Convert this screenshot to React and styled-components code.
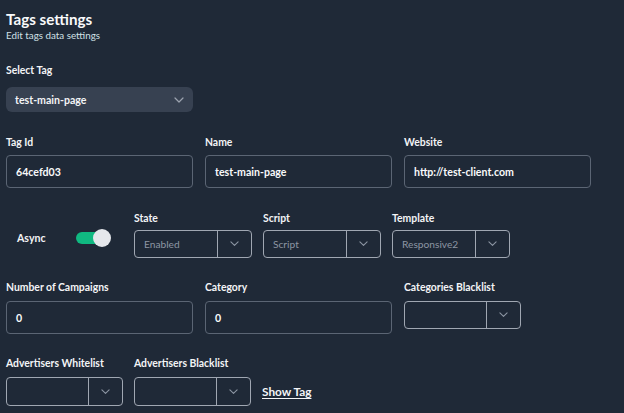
import styled, { createGlobalStyle } from "styled-components";

const GlobalStyle = createGlobalStyle`
  html, body {
    margin: 0;
    padding: 0;
    background: #1f2937;
  }
  body {
    font-family: Lato, "Noto Sans", sans-serif;
    color: #f3f4f6;
  }
`;

const Page = styled.div`
  width: 624px;
  height: 413px;
  box-sizing: border-box;
  padding: 10px 6px 0;
  background: #1f2937;
  overflow: hidden;
`;

const Title = styled.h1`
  margin: 0;
  font-size: 15.2px;
  line-height: 18px;
  font-weight: 700;
  color: #f9fafb;
`;

const Subtitle = styled.p`
  margin: 1px 0 0;
  font-size: 9.8px;
  line-height: 13px;
  color: #d1e0e6;
`;

const Row = styled.div`
  display: flex;
  align-items: ${(p) => p.$align || "flex-start"};
  gap: ${(p) => p.$gap || 12}px;
  margin-top: ${(p) => p.$top || 22}px;
`;

const Field = styled.div`
  display: flex;
  flex-direction: column;
  gap: ${(p) => p.$gap || 6}px;
  width: ${(p) => p.$w}px;
`;

const Label = styled.label`
  font-size: 10.4px;
  line-height: 14px;
  font-weight: 700;
  color: #f3f4f6;
`;

const TagSelect = styled.div`
  height: 25px;
  border-radius: 6px;
  background: #374151;
  display: flex;
  align-items: center;
  justify-content: space-between;
  padding: 0 9px 0 9px;
  font-size: 10.6px;
  font-weight: 700;
  color: #f3f4f6;
`;

const Input = styled.div`
  height: 33px;
  box-sizing: border-box;
  border: 1px solid #5b6574;
  border-radius: 4px;
  display: flex;
  align-items: center;
  padding: 0 9px;
  font-size: 10.6px;
  font-weight: 700;
  color: #f9fafb;
`;

const Select = styled.div`
  height: ${(p) => p.$h || 28}px;
  box-sizing: border-box;
  border: 1px solid #a0a7b2;
  border-radius: 4px;
  display: flex;
  align-items: stretch;
`;

const SelectValue = styled.div`
  flex: 1;
  display: flex;
  align-items: center;
  padding: 0 9px;
  font-size: 10.2px;
  color: #8d96a3;
`;

const SelectArrow = styled.div`
  width: 33px;
  border-left: 1px solid #a0a7b2;
  display: flex;
  align-items: center;
  justify-content: center;
`;

const AsyncBox = styled.div`
  width: 117px;
  height: 28px;
  margin-bottom: 6px;
  display: flex;
  align-items: center;
  padding-left: 11px;
  box-sizing: border-box;
`;

const AsyncLabel = styled.span`
  font-size: 10.6px;
  font-weight: 700;
  width: 59px;
`;

const Toggle = styled.div`
  position: relative;
  width: 36px;
  height: 18px;
`;

const Track = styled.div`
  position: absolute;
  left: 0;
  top: 3px;
  width: 26px;
  height: 12px;
  border-radius: 6px;
  background: #10b981;
`;

const Knob = styled.div`
  position: absolute;
  left: 17px;
  top: 0;
  width: 18px;
  height: 18px;
  border-radius: 50%;
  background: #e5e7eb;
`;

const ShowTag = styled.a`
  font-size: 11.8px;
  font-weight: 700;
  color: #f3f4f6;
  text-decoration: underline;
  text-underline-offset: 2px;
  margin-bottom: 7px;
  cursor: pointer;
`;

const Chevron = ({ color = "#8d96a3", size = 9 }) => (
  <svg width={size} height={size * 0.6} viewBox="0 0 10 6" fill="none">
    <path d="M1 1l4 4 4-4" stroke={color} strokeWidth="1.2" strokeLinecap="round" strokeLinejoin="round" />
  </svg>
);

const DropDown = ({ value, h }) => (
  <Select $h={h}>
    <SelectValue>{value}</SelectValue>
    <SelectArrow>
      <Chevron />
    </SelectArrow>
  </Select>
);

export default function App() {
  return (
    <>
      <GlobalStyle />
      <Page>
        <Title>Tags settings</Title>
        <Subtitle>Edit tags data settings</Subtitle>

        <Row $top={21}>
          <Field $w={187} $gap={10}>
            <Label>Select Tag</Label>
            <TagSelect>
              test-main-page
              <Chevron color="#9ca3af" size={10} />
            </TagSelect>
          </Field>
        </Row>

        <Row $top={23}>
          <Field $w={187}>
            <Label>Tag Id</Label>
            <Input>64cefd03</Input>
          </Field>
          <Field $w={187}>
            <Label>Name</Label>
            <Input>test-main-page</Input>
          </Field>
          <Field $w={187}>
            <Label>Website</Label>
            <Input>http://test-client.com</Input>
          </Field>
        </Row>

        <Row $top={23} $gap={11} $align="flex-end">
          <AsyncBox>
            <AsyncLabel>Async</AsyncLabel>
            <Toggle>
              <Track />
              <Knob />
            </Toggle>
          </AsyncBox>
          <Field $w={118} $gap={5}>
            <Label>State</Label>
            <DropDown value="Enabled" />
          </Field>
          <Field $w={118} $gap={5}>
            <Label>Script</Label>
            <DropDown value="Script" />
          </Field>
          <Field $w={118} $gap={5}>
            <Label>Template</Label>
            <DropDown value="Responsive2" />
          </Field>
        </Row>

        <Row $top={22}>
          <Field $w={187} $gap={7}>
            <Label>Number of Campaigns</Label>
            <Input>0</Input>
          </Field>
          <Field $w={187} $gap={7}>
            <Label>Category</Label>
            <Input>0</Input>
          </Field>
          <Field $w={117} $gap={7}>
            <Label>Categories Blacklist</Label>
            <DropDown value="" h={28} />
          </Field>
        </Row>

        <Row $top={22} $gap={11} $align="flex-end">
          <Field $w={117} $gap={7}>
            <Label>Advertisers Whitelist</Label>
            <DropDown value="" h={29} />
          </Field>
          <Field $w={117} $gap={7}>
            <Label>Advertisers Blacklist</Label>
            <DropDown value="" h={29} />
          </Field>
          <ShowTag>Show Tag</ShowTag>
        </Row>
      </Page>
    </>
  );
}
